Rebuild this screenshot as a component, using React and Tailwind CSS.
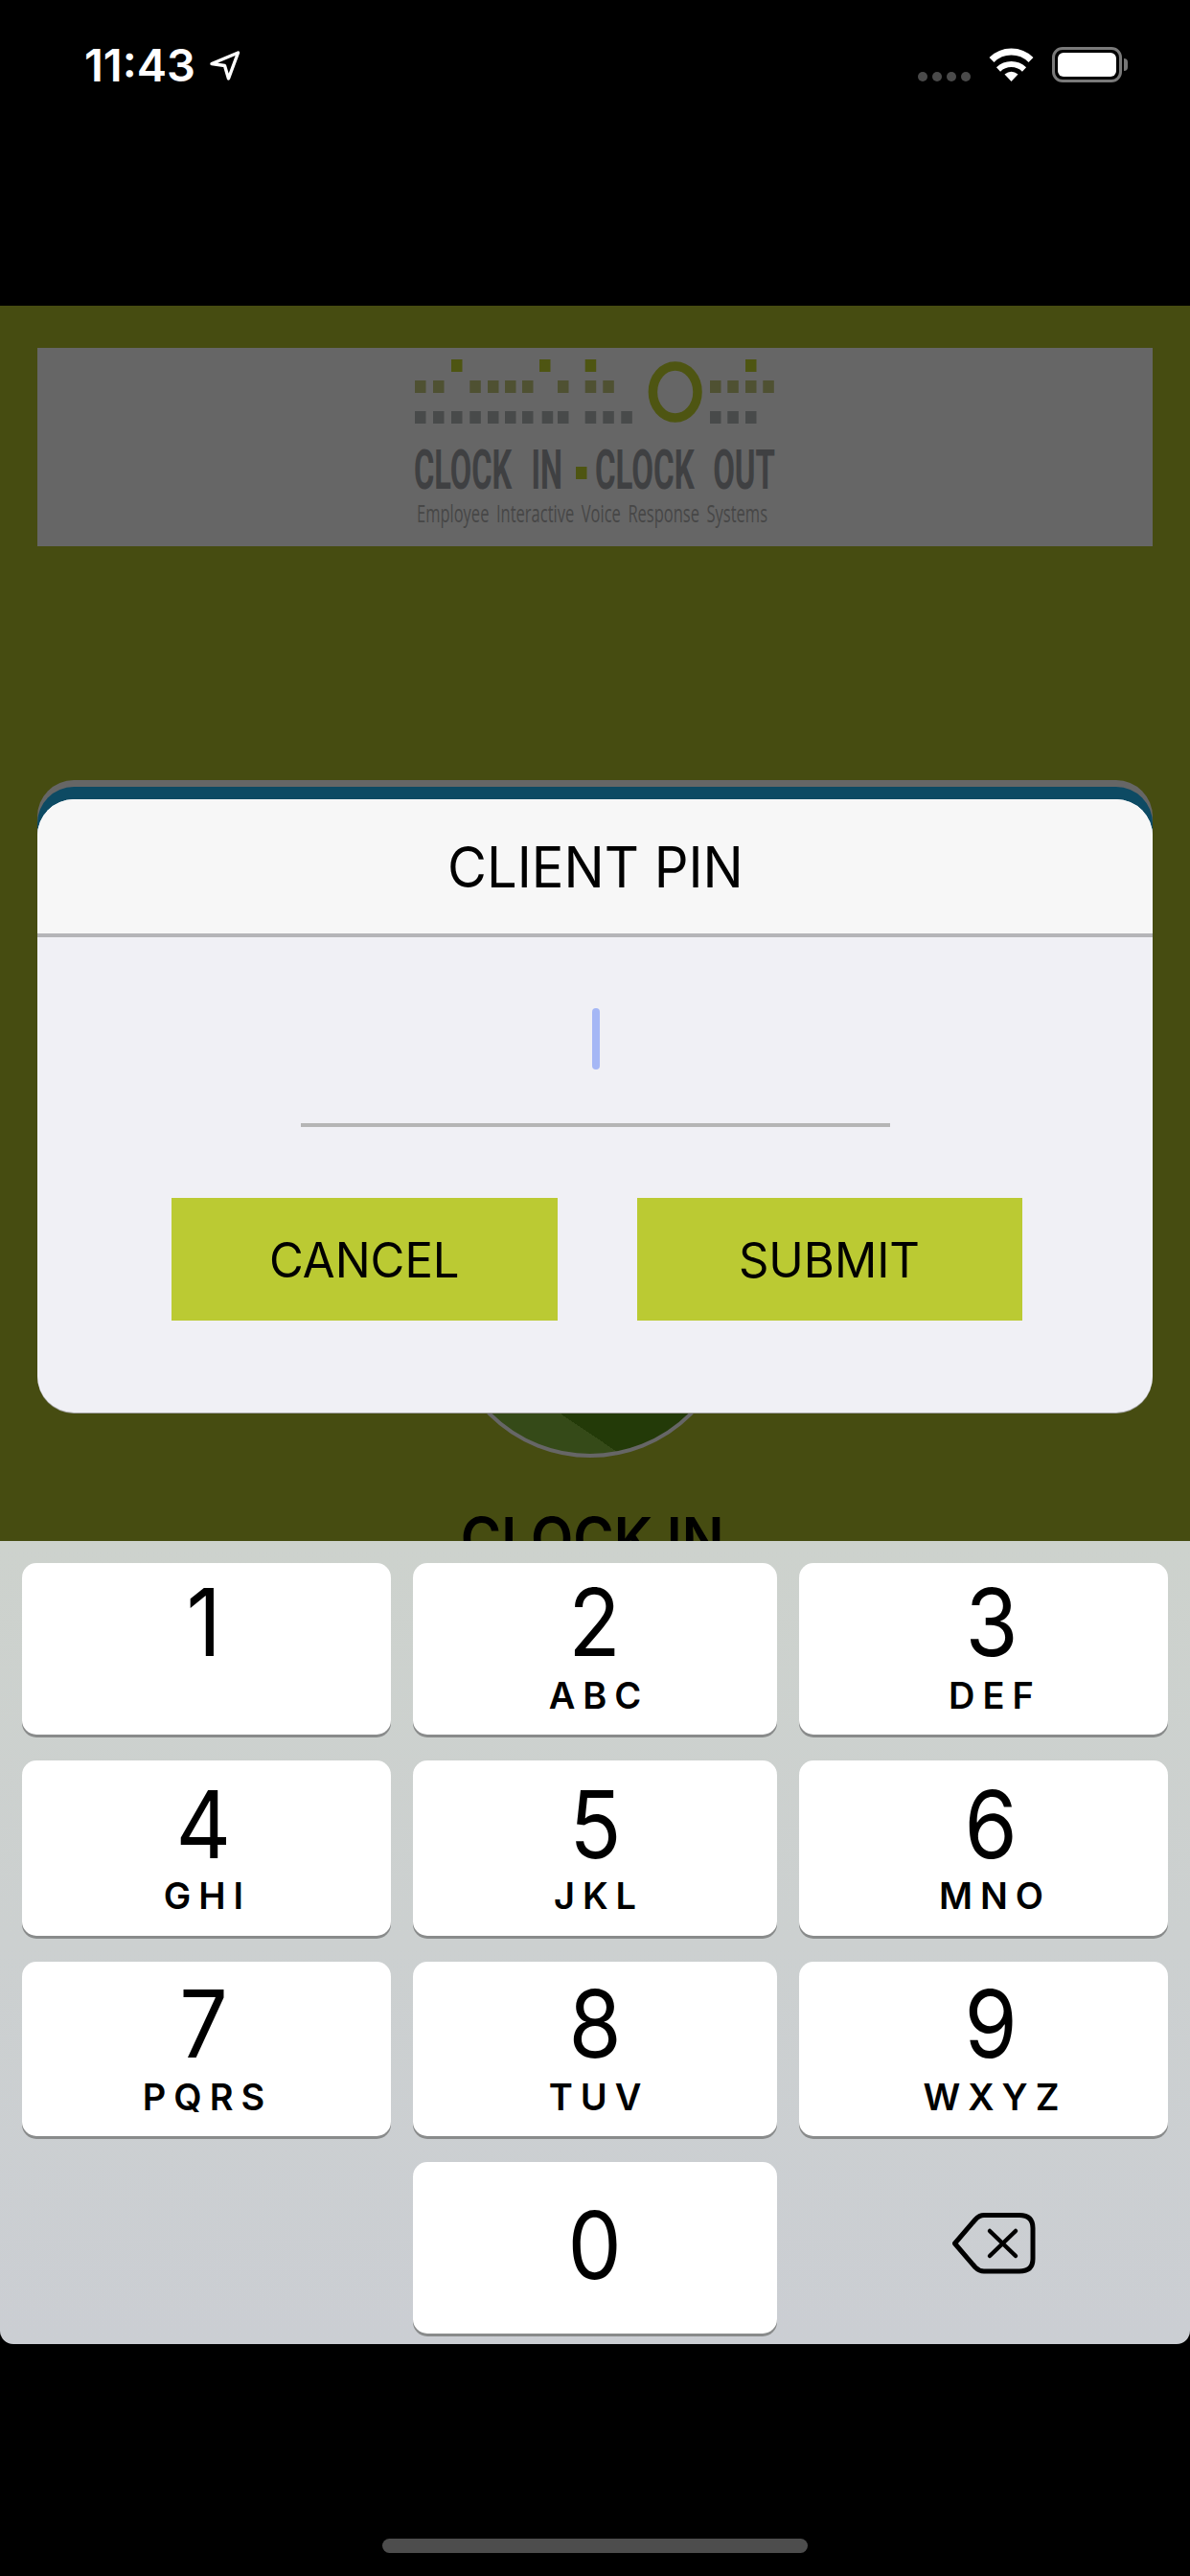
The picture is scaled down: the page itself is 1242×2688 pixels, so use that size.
const SQUARES_TOP = [40, 132, 179.7, 347];
const SQUARES_MID = [2, 21, 59.3, 78, 96, 114, 151, 179.7, 198.3, 310, 328.3, 347, 365.3];
const SQUARES_LOW = [2, 21, 40, 59.3, 78, 96, 114, 134.7, 151, 179.7, 198.3, 217.3, 310, 328.3, 347];

const KEY_ROWS = [
  {
    pad: "pt-[26px]",
    gap: "mt-[27px]",
    keys: [
      { digit: "1", letters: "", nudge: "pr-[6px]" },
      { digit: "2", letters: "ABC", nudge: "" },
      { digit: "3", letters: "DEF", nudge: "pl-[16px]" },
    ],
  },
  {
    pad: "pt-[31px]",
    gap: "mt-[25px]",
    keys: [
      { digit: "4", letters: "GHI", nudge: "pr-[6px]" },
      { digit: "5", letters: "JKL", nudge: "" },
      { digit: "6", letters: "MNO", nudge: "pl-[16px]" },
    ],
  },
  {
    pad: "pt-[29px]",
    gap: "mt-[27px]",
    keys: [
      { digit: "7", letters: "PQRS", nudge: "pr-[6px]" },
      { digit: "8", letters: "TUV", nudge: "" },
      { digit: "9", letters: "WXYZ", nudge: "pl-[16px]" },
    ],
  },
];

function StatusBar() {
  return (
    <div className="h-[319px] flex items-start justify-between pl-[88px] pr-[65px] pt-[49px] bg-black">
      <div className="flex items-start">
        <span className="text-[47px] leading-[38px] font-semibold text-white">11:43</span>
        <svg className="ml-[15px] mt-[4px]" width="32" height="31" viewBox="0 0 32 31" fill="none">
          <path d="M2 13.5 L29.5 2 L19.5 29 L15.5 15.5 Z" stroke="#fff" strokeWidth="3.4" strokeLinejoin="round" />
        </svg>
      </div>
      <div className="flex items-start">
        <div className="flex gap-[5px] mt-[26px]">
          <span className="w-[10px] h-[10px] rounded-full bg-[#4a4a4a]"></span>
          <span className="w-[10px] h-[10px] rounded-full bg-[#4a4a4a]"></span>
          <span className="w-[10px] h-[10px] rounded-full bg-[#4a4a4a]"></span>
          <span className="w-[10px] h-[10px] rounded-full bg-[#4a4a4a]"></span>
        </div>
        <svg className="ml-[19px] mt-[1px]" width="47" height="35" viewBox="0 0 47 35" fill="none">
          <path d="M3 12.5 A29 29 0 0 1 44 12.5" stroke="#fff" strokeWidth="7" />
          <path d="M10 22.5 A19.5 19.5 0 0 1 37 22.5" stroke="#fff" strokeWidth="6" />
          <path d="M23.5 35 L16.5 27.5 Q23.5 22 30.5 27.5 Z" fill="#fff" />
        </svg>
        <div className="ml-[19px] w-[73px] h-[37px] p-[3px] border-[3px] border-[#7a7a7a] rounded-[11px]">
          <div className="w-full h-full bg-white rounded-[6px]"></div>
        </div>
        <div className="ml-[2px] mt-[12px] w-[4px] h-[13px] bg-[#777] rounded-r-full"></div>
      </div>
    </div>
  );
}

function Logo() {
  return (
    <svg className="shrink-0" width="380" height="180" viewBox="0 0 380 180">
      {SQUARES_TOP.map((x) => (
        <rect key={x} x={x} y="0" width="11.5" height="13" fill="#4e5512" />
      ))}
      {SQUARES_MID.map((x) => (
        <rect key={x} x={x} y="22" width="11.5" height="13" fill="#4f5132" />
      ))}
      {SQUARES_LOW.map((x) => (
        <rect key={x} x={x} y="54" width="11.5" height="13" fill="#484a4a" />
      ))}
      <ellipse cx="273.7" cy="34" rx="23.3" ry="27" fill="none" stroke="#4e5512" strokeWidth="9.5" />
      <text x="1" y="135" fontFamily="Roboto, sans-serif" fontWeight="700" fontSize="58" wordSpacing="22" fill="#3f4042" textLength="155" lengthAdjust="spacingAndGlyphs">
        CLOCK IN
      </text>
      <rect x="170" y="112" width="11.5" height="13" fill="#4e5512" />
      <text x="190" y="135" fontFamily="Roboto, sans-serif" fontWeight="700" fontSize="58" wordSpacing="20" fill="#3f4042" textLength="188" lengthAdjust="spacingAndGlyphs">
        CLOCK OUT
      </text>
      <text x="4" y="170" fontFamily="'Open Sans', sans-serif" fontWeight="400" fontSize="25" wordSpacing="5" fill="#474747" textLength="366" lengthAdjust="spacingAndGlyphs">
        Employee Interactive Voice Response Systems
      </text>
    </svg>
  );
}

function Key({ digit, letters, pad, gap, nudge }) {
  return (
    <div className={`h-full flex flex-col items-center bg-white rounded-[15px] shadow-[0_3px_0_#898b8b] ${pad} ${nudge}`}>
      <span className="text-[97px] leading-[71px] text-black scale-x-[0.92]">{digit}</span>
      {letters && (
        <span className={`text-[38px] leading-[28px] font-semibold tracking-[8px] mr-[-8px] text-black ${gap}`}>{letters}</span>
      )}
    </div>
  );
}

function Keyboard() {
  return (
    <div className="h-[838px] pt-[23px] pl-[23px] rounded-b-[14px] bg-gradient-to-b from-[#cdd2cd] to-[#cbced3]">
      <div className="grid grid-cols-[385px_380px_385px] grid-rows-[179px_183px_182px_179px] gap-x-[23px] gap-y-[27px]">
        {KEY_ROWS.map((row) =>
          row.keys.map((k) => (
            <Key key={k.digit} digit={k.digit} letters={k.letters} nudge={k.nudge} pad={row.pad} gap={row.gap} />
          ))
        )}
        <div></div>
        <div className="h-full flex items-center justify-center bg-white rounded-[15px] shadow-[0_3px_0_#898b8b]">
          <span className="text-[97px] leading-[71px] text-black mt-[-6px] scale-x-[0.92]">0</span>
        </div>
        <div className="h-full flex items-center justify-center pb-[9px] pl-[21px]">
          <svg width="88" height="64" viewBox="0 0 88 64" fill="none">
            <path
              d="M3.5 32 L25 7 Q29 2.5 34 2.5 H71 Q85 2.5 85 16 V48 Q85 61 71 61 H34 Q29 61 25 57 Z"
              stroke="#000"
              strokeWidth="5"
              strokeLinejoin="round"
            />
            <path d="M40 19 L67 45 M67 19 L40 45" stroke="#000" strokeWidth="4.5" strokeLinecap="round" />
          </svg>
        </div>
      </div>
    </div>
  );
}

function PinDialog() {
  return (
    <div className="absolute left-[39px] top-[515px] w-[1164px] h-[640px] rounded-[38px] overflow-hidden bg-[#f0f0f5] shadow-[0_1px_0_#9a9a96]">
      <div className="h-[140px] flex items-center justify-center bg-[#f7f7f7]">
        <span className="text-[59px] leading-none text-black scale-x-[0.95]">CLIENT PIN</span>
      </div>
      <div className="h-[4px] bg-[#b5b5b8]"></div>
      <div className="flex flex-col items-center pt-[74px]">
        <div className="w-[8px] h-[64px] ml-[1px] rounded-full bg-[#a5b7f5]"></div>
        <div className="w-[615px] h-[4px] mt-[56px] bg-[#b5b5b5]"></div>
        <div className="flex gap-[83px] mt-[74px] ml-[3px]">
          <div className="w-[403px] h-[128px] pt-[3px] flex items-center justify-center bg-[#bbca33] text-[50px] text-black">
            <span className="scale-x-[0.98]">CANCEL</span>
          </div>
          <div className="w-[402px] h-[128px] pt-[3px] flex items-center justify-center bg-[#bbca33] text-[50px] text-black">
            <span className="scale-x-[0.98]">SUBMIT</span>
          </div>
        </div>
      </div>
    </div>
  );
}

export default function App() {
  return (
    <div className="w-[1242px] h-[2688px] overflow-hidden bg-black font-['Inter',sans-serif]">
      <StatusBar />

      <div className="relative h-[1289px] overflow-hidden bg-[#464c11] flex flex-col items-center">
        <div className="shrink-0 w-[1164px] h-[207px] mt-[44px] pt-[12px] flex justify-center bg-[#666666]">
          <Logo />
        </div>
        <div className="shrink-0 w-[1164px] h-[300px] mt-[244px] pt-[7px] rounded-[38px] bg-[#666666]">
          <div className="h-full rounded-t-[38px] bg-[#0d4a63]"></div>
        </div>
        <div className="shrink-0 w-[300px] h-[300px] mt-[107px] ml-[-10px] rounded-full border-[4px] border-[#666666] bg-[linear-gradient(34deg,#354a18_99px,#233a08_99px)]"></div>
        <div className="shrink-0 mt-[54px] ml-[-5px] text-[60px] leading-none font-semibold text-black scale-x-[0.96]">CLOCK IN</div>
        <PinDialog />
      </div>

      <Keyboard />

      <div className="pt-[203px]">
        <div className="w-[444px] h-[15px] mx-auto rounded-full bg-[#4d4d4d]"></div>
      </div>
    </div>
  );
}
